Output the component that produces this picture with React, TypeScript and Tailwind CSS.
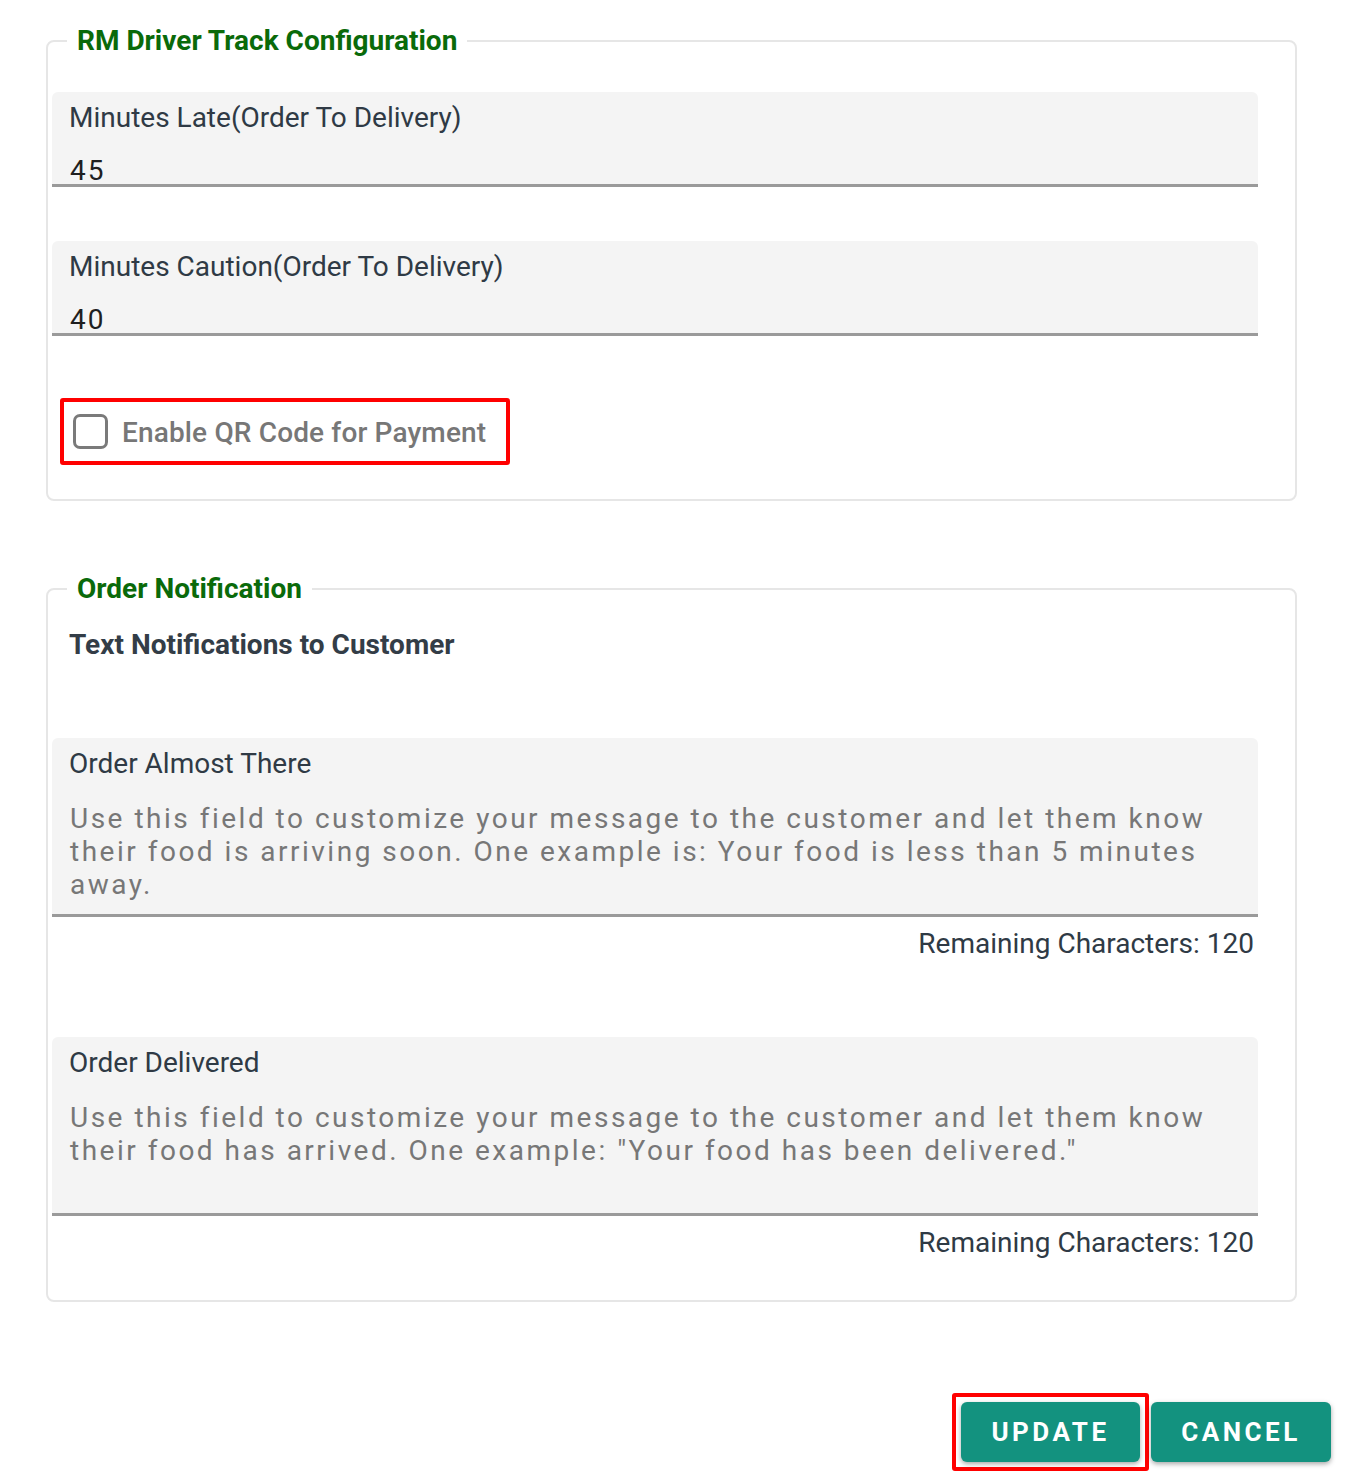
import React from "react";

const font = { fontFamily: "Roboto, 'Noto Sans', sans-serif" };

function Input({ label, value }: { label: string; value: string }) {
  return (
    <div className="h-[95px] rounded-t-[6px] bg-[#f4f4f4] border-b-[3px] border-[#9a9a9a] px-[17px] pt-[11px]">
      <div className="text-[28px] leading-[30px] text-[#2f3a45]">{label}</div>
      <div className="mt-[23px] text-[28px] leading-[30px] tracking-[2px] text-[#1f1f1f] pl-[1px]">{value}</div>
    </div>
  );
}

function TextArea({ label, lines }: { label: string; lines: string[] }) {
  return (
    <div>
      <div className="h-[179px] rounded-t-[6px] bg-[#f4f4f4] border-b-[3px] border-[#9a9a9a] px-[17px] pt-[11px]">
        <div className="text-[28px] leading-[30px] text-[#2f3a45]">{label}</div>
        <div className="mt-[23px] text-[28px] leading-[33px] tracking-[2.5px] text-[#777777] pl-[1px] whitespace-nowrap">
          {lines.map((l, i) => (
            <div key={i}>{l}</div>
          ))}
        </div>
      </div>
      <div className="mt-[12px] pr-[4px] text-right text-[28px] leading-[30px] text-[#2f3a45]">
        Remaining Characters: 120
      </div>
    </div>
  );
}

export default function App() {
  return (
    <div className="bg-white min-h-[1482px] pt-[25px]" style={font}>
      <div className="ml-[46px] w-[1251px]">
        <fieldset className="border-2 border-[#e6e6e6] rounded-[8px] pl-[4px] pr-[37px] pb-[34px]">
          <legend className="ml-[15px] px-[10px] text-[28px] leading-[31px] font-bold text-[#0a6a0a]">
            RM Driver Track Configuration
          </legend>
          <div className="pt-[36px]">
            <Input label="Minutes Late(Order To Delivery)" value="45" />
            <div className="mt-[54px]">
              <Input label="Minutes Caution(Order To Delivery)" value="40" />
            </div>
            <div className="mt-[62px] ml-[8px] inline-flex h-[67px] items-center border-4 border-[#ff0000] rounded-[3px] pl-[9px] pr-[20px]">
              <div className="w-[35px] h-[35px] rounded-[7px] border-[3px] border-[#7a7a7a] bg-white" />
              <span className="ml-[14px] pt-[2px] text-[28px] leading-[30px] font-medium tracking-[0.15px] text-[#777777]">
                Enable QR Code for Payment
              </span>
            </div>
          </div>
        </fieldset>

        <fieldset className="mt-[72px] border-2 border-[#e6e6e6] rounded-[8px] pl-[4px] pr-[37px] pb-[42px]">
          <legend className="ml-[15px] px-[10px] text-[28px] leading-[31px] font-bold text-[#0a6a0a]">
            Order Notification
          </legend>
          <div className="pt-[26px]">
            <div className="pl-[17px] text-[28px] leading-[30px] font-bold text-[#333d47]">
              Text Notifications to Customer
            </div>
            <div className="mt-[78px]">
              <TextArea
                label="Order Almost There"
                lines={[
                  "Use this field to customize your message to the customer and let them know",
                  "their food is arriving soon. One example is: Your food is less than 5 minutes",
                  "away.",
                ]}
              />
            </div>
            <div className="mt-[78px]">
              <TextArea
                label="Order Delivered"
                lines={[
                  "Use this field to customize your message to the customer and let them know",
                  'their food has arrived. One example: "Your food has been delivered."',
                ]}
              />
            </div>
          </div>
        </fieldset>
      </div>

      <div className="mt-[91px] flex justify-end pr-[33px] items-start">
        <div className="border-4 border-[#ff0000] rounded-[3px] p-[5px]">
          <button className="w-[179px] h-[60px] rounded-[6px] bg-[#13927f] text-white text-[26px] font-bold tracking-[3.5px] shadow-[0_2px_5px_rgba(0,0,0,0.35)]">
            UPDATE
          </button>
        </div>
        <button className="ml-[2px] mt-[9px] w-[180px] h-[60px] rounded-[6px] bg-[#13927f] text-white text-[26px] font-bold tracking-[3.5px] shadow-[0_2px_5px_rgba(0,0,0,0.35)]">
          CANCEL
        </button>
      </div>
    </div>
  );
}
